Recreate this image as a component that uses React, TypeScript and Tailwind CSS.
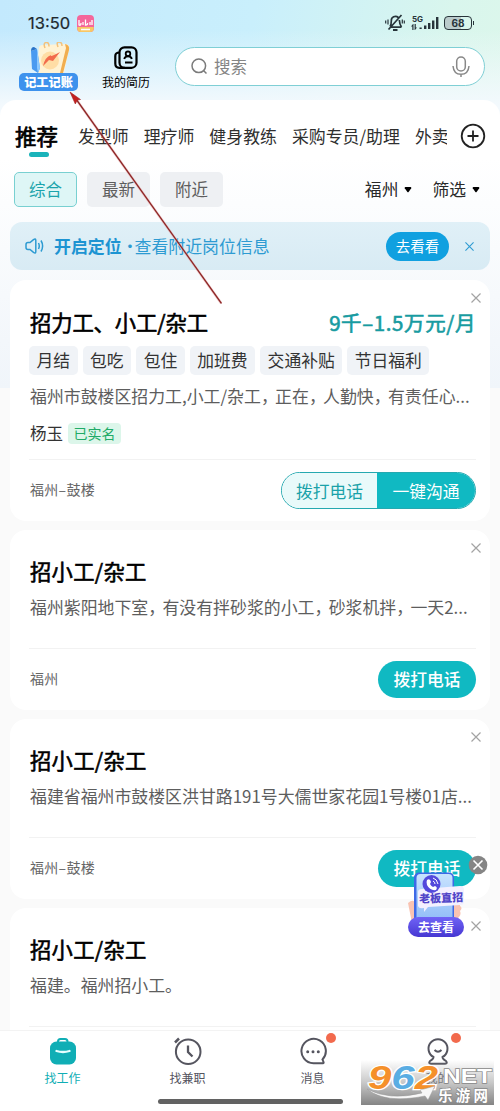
import { Fragment, type ReactNode } from "react";
import clsx from "clsx";

type Job = {
  title: string;
  salary?: string;
  tags?: string[];
  text: string;
  author?: string;
  place: string;
  chat?: boolean;
};

const tabs = ["发型师", "理疗师", "健身教练", "采购专员/助理", "外卖"];

const jobs: Job[] = [
  {
    title: "招力工、小工/杂工",
    salary: "9千–1.5万元/月",
    tags: ["月结", "包吃", "包住", "加班费", "交通补贴", "节日福利"],
    text: "福州市鼓楼区招力工,小工/杂工，正在，人勤快，有责任心...",
    author: "杨玉",
    place: "福州–鼓楼",
    chat: true,
  },
  {
    title: "招小工/杂工",
    text: "福州紫阳地下室，有没有拌砂浆的小工，砂浆机拌，一天2...",
    place: "福州",
  },
  {
    title: "招小工/杂工",
    text: "福建省福州市鼓楼区洪甘路191号大儒世家花园1号楼01店...",
    place: "福州–鼓楼",
  },
  {
    title: "招小工/杂工",
    text: "福建。福州招小工。",
    place: "福州–鼓楼",
  },
];

function CloseIcon({ className }: { className?: string }) {
  return (
    <svg viewBox="0 0 10 10" className={className} fill="none" stroke="currentColor" strokeWidth="1.200">
      <path d="M.5.5l9 9M9.5.5l-9 9" />
    </svg>
  );
}

function StatusBar() {
  return (
    <div className="flex h-[42px] items-center pt-1 pl-[28px] pr-[28px] shrink-0">
      <span className="w-[42px] text-[16.500px] whitespace-nowrap text-[#20282d] [-webkit-text-stroke:0.2px] font-['Inter','Noto_Sans_CJK_SC',sans-serif]">
        13:50
      </span>
      <svg viewBox="0 0 17 17" className="size-[17px] ml-[7px]">
        <rect width="17" height="17" rx="4" fill="#f4679b" />
        <path d="M.3 12h16.4v1.5A3.5 3.5 0 0 1 13.200 17H3.800A3.500 3.500 0 0 1 .3 13.500z" fill="#f8c765" />
        <path
          d="M2 5v5q2 1 2-2M6 7v3M8.500 4.500v5.500q2.500 0 2-2M13 7v3M15 5v5M4 14.500h9"
          stroke="#fff"
          strokeWidth="1.300"
          fill="none"
        />
      </svg>
      <div className="flex items-center ml-auto text-[#27343a]">
        <svg viewBox="0 0 20 18" className="w-5 h-[18px] mr-[6px]" fill="none" stroke="currentColor" strokeWidth="1.700">
          <path d="M5 13.200h11.500M5 12.500c1.300-1.500 1.300-3.500 1.300-5.500a4.200 4.200 0 0 1 7-3.500M14.300 6c.2 3.500.5 4.500 2.200 7M3.500 15.500L16.500 1" />
          <path d="M8 16h4.500" strokeWidth="2" />
          <path d="M.7 6.500v3M3 5.500v5M17.300 5.500v4M19.300 6.500v3" strokeWidth="1.200" />
        </svg>
        <svg viewBox="0 0 28 16" className="w-7 h-4 mr-[5px]" fill="currentColor">
          <text x="1" y="6.500" fontSize="8" fontWeight="700" fontFamily="Inter">
            5G
          </text>
          <path d="M2 9l-2 2.500h1.300V15h1.200V9zM4 15l2-2.500H4.800V9H3.600v6zM8.500 12.500h2.200V14H8.500zM13 10.500h2.400V14H13zM17 8h2.400v6H17zM21 5.500h2.400V14H21zM25 2h2.400v12H25z" />
        </svg>
        <div className="relative flex h-[14px] w-[28px] items-center justify-center rounded-[4px] border-[1.500px] border-current bg-linear-to-r from-[#bacbcb] from-60% to-transparent to-60% text-[10px] leading-none font-bold font-['Inter','Noto_Sans_CJK_SC',sans-serif]">
          68
          <i className="absolute -right-[3px] top-[4px] h-[4px] w-[1.500px] bg-current" />
        </div>
      </div>
    </div>
  );
}

function Header() {
  return (
    <div className="flex h-[58px] shrink-0 pl-[19px] pr-[15px]">
      <div className="flex w-[59px] flex-col">
        <svg viewBox="0 0 59 31" className="w-[59px] h-[31px]">
          <path d="M24 3l22-1q5 0 4 5l-5 24H18L20 6q0-3 4-3z" fill="#fff2d3" />
          <path d="M46 2q5 1 4 6l-6 23h-3l6-25z" fill="#f1ae4f" />
          <circle cx="31" cy="18.500" r="9" fill="#ffdda5" />
          <path d="M24 24q2-9 8-11-2 3 9-3l-7 9-4-1z" fill="#f26b4c" />
          <path d="M26 6q-2-5 1-5.500t3 4M39 5q-2-5 1-5t3 4" stroke="#f4c17a" strokeWidth="1.500" fill="none" />
          <path d="M12 9l6-2 3 19-2 5-6-4z" fill="#4a9af0" />
          <path d="M12 9l6-2-3-2q-3 0-3 4z" fill="#2973c8" />
          <path d="M18 7l3 19-2 5-1-5z" fill="#8bc8ff" />
        </svg>
        <div className="flex h-[18px] w-[59px] items-center justify-center rounded-[5px] bg-[#3e92ed] text-[12.200px] leading-none font-black text-white">
          记工记账
        </div>
      </div>
      <div className="ml-[24px] flex w-12 flex-col items-center text-black">
        <svg viewBox="0 0 24 24" className="size-6 mt-[4px]" fill="none" stroke="currentColor" strokeWidth="2.200">
          <rect x="5.500" y="1.300" width="17" height="20.500" rx="5" />
          <path d="M5.500 6.500Q1.300 6.500 1.300 10v7.500q0 4.300 4 4.300H11M11 16.500h7.500" />
          <path d="M10.200 13c.5-2 1.800-2.600 3.800-2.600s3.400.6 3.800 2.600" strokeWidth="1.800" />
          <circle cx="14" cy="7.800" r="2.300" strokeWidth="1.800" />
        </svg>
        <span className="mt-[3px] text-[12px] leading-[18px] whitespace-nowrap">我的简历</span>
      </div>
      <div className="ml-[25px] mt-[5px] flex h-[39px] flex-1 items-center rounded-full border-[1.500px] border-[#7fcfd5] bg-white pl-[15px] pr-[14px]">
        <svg viewBox="0 0 17 17" className="size-[17px]" fill="none" stroke="#7b7b7b" strokeWidth="1.500">
          <circle cx="7.800" cy="7.800" r="6.800" />
          <path d="M12.500 12.500l3 3" />
        </svg>
        <span className="ml-[6px] -mt-px text-[16.500px] leading-none text-[#858585]">搜索</span>
        <svg viewBox="0 0 18 22" className="ml-auto w-[18px] h-[22px]" fill="none" stroke="#888" strokeWidth="1.500">
          <rect x="4.700" y="1" width="8.600" height="14" rx="4.300" />
          <path d="M1 10c.5 6 3.500 8.300 8 8.300s7.500-2.300 8-8.300M9 18.300V21" />
        </svg>
      </div>
    </div>
  );
}

function Tabs() {
  return (
    <div className="flex h-[72px] shrink-0 items-center pl-[15px] pr-[14px]">
      <div className="relative text-[21.500px] leading-none text-black [-webkit-text-stroke:0.7px]">
        推荐
        <i className="absolute left-[14px] top-[27px] h-[5px] w-5 rounded-full bg-[#1ab3ba]" />
      </div>
      <div className="ml-5 flex w-[369px] gap-[15px] overflow-hidden whitespace-nowrap text-[16.900px] leading-6 text-[#2f2f2f]">
        {tabs.map((tab) => (
          <span key={tab}>{tab}</span>
        ))}
      </div>
      <svg viewBox="0 0 26 26" className="ml-auto size-[26px] shrink-0" fill="none" stroke="#222" strokeWidth="1.800">
        <circle cx="13" cy="13" r="11.300" />
        <path d="M13 7.500v11M7.500 13h11" />
      </svg>
    </div>
  );
}

function Dropdown({ children }: { children: string }) {
  return (
    <div className="flex items-center gap-[6px] text-[16.800px] text-[#292929]">
      {children}
      <svg viewBox="0 0 8 7" className="w-2 h-[7px] -mt-px">
        <path d="M1.500 1h5q1.200 0 .7 1.200L4.600 6q-.6.7-1.200 0L.8 2.200Q.3 1 1.500 1z" fill="#000" />
      </svg>
    </div>
  );
}

function Filters() {
  return (
    <div className="flex h-[35px] shrink-0 items-center pl-[14px] pr-5">
      <div className="flex gap-[10px] text-[16.500px] text-[#5d5d5d]">
        {["综合", "最新", "附近"].map((name, i) => (
          <button
            key={name}
            className={clsx(
              "h-[35px] w-[63px] rounded-[5px] leading-none",
              i === 0 ? "border-[1.500px] border-[#78d0d1] bg-[#def6f6] text-[#1ba4ac]" : "bg-[#eef0f3]",
            )}
          >
            {name}
          </button>
        ))}
      </div>
      <div className="ml-auto flex gap-5">
        <Dropdown>福州</Dropdown>
        <Dropdown>筛选</Dropdown>
      </div>
    </div>
  );
}

function LocationBanner() {
  return (
    <div className="mx-[10px] mt-[15px] flex h-12 shrink-0 items-center rounded-xl bg-linear-to-b from-[#e0f0f7] to-[#d8ebf4] pl-[15px] pr-4 text-[16.900px] leading-none text-[#2d9bd2]">
      <svg viewBox="0 0 19 18" className="w-[19px] h-[18px]" fill="none" stroke="currentColor" strokeWidth="1.500">
        <path d="M3 5.500h2L8.500 2.700Q10.800 1 10.800 3.500v11q0 2.500-2.300.8L5 12.500H3q-2 0-2-2v-3q0-2 2-2zM13.500 6q1.500 3 0 6M16 3.500q3.200 5.500 0 11" />
      </svg>
      <b className="ml-[10px] text-[#1d94d2]">开启定位</b>
      <span className="w-[13px] text-center">·</span>
      <span>查看附近岗位信息</span>
      <button className="ml-auto h-[29px] w-[63px] rounded-full bg-[#10a0e0] text-[14.500px] leading-none text-white">
        去看看
      </button>
      <CloseIcon className="ml-4 size-[9px]" />
    </div>
  );
}

// full-width commas are set a little tighter than the other glyphs
function tighten(text: string): ReactNode {
  return text.split("，").map((part, i) => (
    <Fragment key={i}>
      {i > 0 && <span className="tracking-[-2.700px]">，</span>}
      {part}
    </Fragment>
  ));
}

function JobCard({ job }: { job: Job }) {
  return (
    <article className="relative shrink-0 rounded-2xl bg-white px-5 pb-3">
      <CloseIcon className="absolute right-[9px] top-[13px] size-[10px] text-[#a3a3a3]" />
      <div
        className={clsx(
          "flex justify-between leading-[30px] [-webkit-text-stroke:0.6px]",
          job.salary ? "pt-[27px] tracking-[-0.100px]" : "pt-[26px] tracking-[0.300px]",
        )}
      >
        <h2 className="text-[21.300px] text-black">{job.title}</h2>
        {job.salary && (
          <span className="-mr-[6px] text-[20.500px] tracking-[0.600px] text-[#189ba1] whitespace-nowrap">{job.salary}</span>
        )}
      </div>
      {job.tags && (
        <ul className="mt-[9px] mb-[2px] flex gap-[5px] -ml-px">
          {job.tags.map((tag) => (
            <li
              key={tag}
              className="h-[29px] rounded-[5px] bg-[#f0f3f7] px-[7.500px] text-[16.800px] leading-[29px] text-[#333] whitespace-nowrap"
            >
              {tag}
            </li>
          ))}
        </ul>
      )}
      <p className="mt-[7px] h-7 text-[16.900px] leading-7 whitespace-nowrap text-[#5d5d5d]">{tighten(job.text)}</p>
      {job.author && (
        <div className="mt-[13px] -mb-[11px] flex h-[21px] items-center gap-[5px]">
          <span className="text-[16.500px] leading-none text-[#333]">{job.author}</span>
          <span className="h-[21px] rounded-[4px] bg-[#dcf6ea] px-[5.500px] text-[14px] leading-[21px] text-[#20ab67]">
            已实名
          </span>
        </div>
      )}
      <div className={clsx("-ml-px -mr-[6px] h-px bg-[#f2f2f2]", job.salary ? "mt-[26px]" : "mt-[27px]")} />
      <div className="mt-3 -mr-[6px] flex h-[37px] items-center justify-between">
        <span className="-mt-[2px] text-[14px] text-[#666] tracking-[0.300px]">{job.place}</span>
        {job.chat ? (
          <div className="flex h-[37px] w-[195px] overflow-hidden rounded-full border-[1.500px] border-[#25a9b0] text-[16.800px] leading-[34px] text-center">
            <button className="w-[95px] bg-[#e9fafa] text-[#1aa2a9]">拨打电话</button>
            <button className="flex-1 bg-[#10b9c2] text-white">一键沟通</button>
          </div>
        ) : (
          <button className="h-[37px] w-[98px] rounded-full bg-[#10b9c2] text-[16.800px] leading-none font-medium text-white">
            拨打电话
          </button>
        )}
      </div>
    </article>
  );
}

function NavItem({ label, active, dot, children }: { label: string; active?: boolean; dot?: boolean; children: ReactNode }) {
  return (
    <div className={clsx("flex w-[125px] flex-col items-center", active ? "text-[#10aeb5]" : "text-[#55555f]")}>
      <div className="relative mt-[6px] h-7 w-7">
        <svg viewBox="0 0 28 28" className="size-7" fill="none" stroke="currentColor" strokeWidth="2">
          {children}
        </svg>
        {dot && <i className="absolute -right-[9px] -top-[4px] size-[10px] rounded-full bg-[#f26a4d]" />}
      </div>
      <span className="mt-[4px] text-[12px] leading-[18px]">{label}</span>
    </div>
  );
}

function BottomNav() {
  return (
    <nav className="absolute inset-x-0 bottom-0 h-[81px] border-t border-[#f3f3f3] bg-white">
      <div className="flex">
        <NavItem label="找工作" active>
          <path d="M9 5.500V4.500q0-2.500 2.500-2.500h4.500q2.500 0 2.500 2.500v1" />
          <rect x="1" y="4.500" width="26" height="23" rx="6.500" fill="currentColor" stroke="none" />
          <path d="M7.500 14q6.500 2 13 0" stroke="#e6ffff" strokeWidth="2.300" strokeLinecap="round" />
        </NavItem>
        <NavItem label="找兼职">
          <circle cx="14.200" cy="14.700" r="12.300" />
          <path d="M14 8.500v6.500l4.500 4.500" strokeWidth="2.300" />
          <path d="M1 5.500L5 1.500" strokeWidth="2.500" />
        </NavItem>
        <NavItem label="消息" dot>
          <path d="M24 26.300h-9.500A12.200 12.200 0 1 1 23.500 22.500l1 2.500q.4 1.300-.5 1.300z" />
          <path d="M8.700 14.700h.01M14 14.700h.01M19.300 14.700h.01" strokeWidth="3" strokeLinecap="round" />
        </NavItem>
        <NavItem label="我的" dot>
          <path d="M9.500 20a9.500 9.500 0 1 1 9 0q0 2 3.500 4 2 2.500-1 2.800H7q-3-.3-1-2.800 3.500-2 3.500-4z" />
          <path d="M10.500 13q3.500 3.500 7 0" />
        </NavItem>
      </div>
      <div className="mx-auto mt-[12px] h-[5px] w-[185px] rounded-full bg-[#626262]" />
    </nav>
  );
}

function FloatingAd() {
  return (
    <div className="absolute left-[407px] top-[854px] h-[84px] w-[81px]">
      <svg viewBox="0 0 81 84" className="absolute inset-0">
        <defs>
          <linearGradient id="phone" x2="0" y2="1">
            <stop stopColor="#c8e3fe" />
            <stop offset="1" stopColor="#8bb9f7" />
          </linearGradient>
          <linearGradient id="pill" x2="0" y2="1">
            <stop stopColor="#7063f6" />
            <stop offset="1" stopColor="#4637d2" />
          </linearGradient>
        </defs>
        <path d="M1 49q7-6 9 4v16H5zM44 52q10-9 9 0 3 2 0 5 2 4-3 8l-8 4z" fill="#f9c3b2" />
        <rect x="7" y="18.500" width="40" height="54" rx="5" fill="#3e69e7" />
        <rect x="9.500" y="20" width="36" height="52" rx="4" fill="url(#phone)" />
        <path d="M15 35l38-3q4 0 4 4v12q0 3-4 3l-32 2-4 5v-4q-7 1-6-4V38q0-3 4-3z" fill="#f3f0ff" />
        <circle cx="24.500" cy="30" r="9" fill="#5449dc" />
        <path d="M20 26q3-2 4 2l-1 2q1 2 3 3l2-1q3 1 1 4-6 1-9-5-1-3 0-5z" fill="#fff" />
        <path d="M26 27q2 1 2 3M26 24q4 1 5 6" stroke="#fff" fill="none" />
        <rect x="1" y="63" width="56" height="20" rx="10" fill="url(#pill)" />
        <circle cx="71" cy="11" r="9.300" fill="#858585" />
        <path d="M66.500 6.500l9 9m0-9l-9 9" stroke="#fff" strokeWidth="1.600" />
      </svg>
      <span className="absolute left-[12px] top-[35px] -rotate-2 text-[11px] leading-4 font-black whitespace-nowrap text-[#5145c8]">
        老板直招
      </span>
      <span className="absolute left-[1px] top-[64px] w-14 text-center text-[12px] leading-[18px] font-bold text-white">
        去查看
      </span>
    </div>
  );
}

function Watermark() {
  return (
    <div className="absolute left-[361px] top-[1060px] h-[45px] w-[133px] bg-linear-to-b from-transparent via-[#9c9c9c]/55 to-[#777]/90">
      <svg viewBox="0 0 133 45" className="absolute inset-0">
        <text
          x="7"
          y="29"
          fontFamily="Liberation Sans"
          fontWeight="700"
          fontStyle="italic"
          fontSize="34"
          stroke="#fff"
          strokeWidth="2.500"
          paintOrder="stroke"
          textLength="70"
          lengthAdjust="spacingAndGlyphs"
        >
          <tspan fill="#f5902a">9</tspan>
          <tspan fill="#5aade3">6</tspan>
          <tspan fill="#f5902a">2</tspan>
        </text>
        <path d="M6 29q22 12 55 4l-2-3 15-4-7 14-3-4Q24 44 6 29z" fill="#f7f7f7" stroke="#999" strokeWidth=".5" />
        <g fill="#fff" stroke="#888" strokeWidth="1.300" paintOrder="stroke" fontWeight="700">
          <text x="82" y="23" fontFamily="Liberation Sans" fontSize="19.500" textLength="49" lengthAdjust="spacingAndGlyphs">NET</text>
          <text x="77" y="40.500" fontFamily="Noto Sans CJK SC" fontSize="14.500" textLength="50">乐游网</text>
        </g>
      </svg>
    </div>
  );
}

export default function App() {
  return (
    <div className="relative flex h-[1111px] w-[500px] flex-col overflow-hidden bg-[#fafafa] font-['Noto_Sans_CJK_SC',sans-serif]">
      <div className="flex h-[388px] shrink-0 flex-col bg-[linear-gradient(to_bottom,transparent_0,transparent_30px,#f3f9fd_105px),linear-gradient(100deg,#c3e9fd_0%,#c9effc_45%,#d9f6ed_80%,#def7ea_100%)]">
        <StatusBar />
        <Header />
        <div className="flex h-72 flex-col rounded-t-2xl bg-linear-to-b from-white from-20% to-[#f0f5fa]">
          <Tabs />
          <Filters />
          <LocationBanner />
        </div>
      </div>
      <main className="-mt-[108px] flex flex-col gap-[9px] px-[10px]">
        {jobs.map((job, i) => (
          <JobCard key={i} job={job} />
        ))}
      </main>
      <BottomNav />
      <FloatingAd />
      <Watermark />
      <svg viewBox="0 0 170 220" className="absolute left-[60px] top-[88px] h-[220px] w-[170px]">
        <path d="M161 215L16 11" stroke="#e9a6a6" strokeWidth="2.600" opacity=".5" />
        <path d="M161.500 215.500L16 11" stroke="#8e2727" strokeWidth="1.300" />
        <path d="M10 4l10.500 7.500-3.200.5-2 4z" fill="#c41f1f" stroke="#a32020" strokeWidth=".6" />
      </svg>
    </div>
  );
}
